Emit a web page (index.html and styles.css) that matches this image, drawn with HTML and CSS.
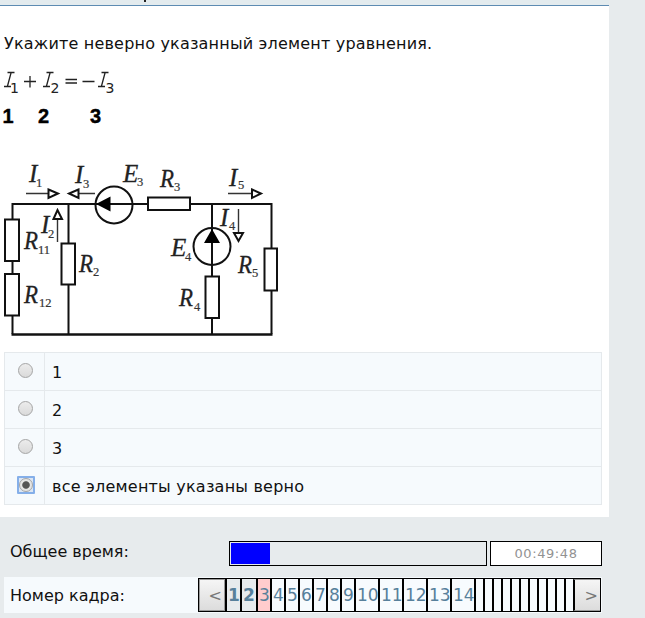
FILE: index.html
```
<!DOCTYPE html>
<html lang="ru">
<head>
<meta charset="utf-8">
<title>Тест</title>
<link rel="stylesheet" href="styles.css">
</head>
<body>
<main class="sheet">
  <div class="strip"><i class="tail"></i></div>
  <p class="question">Укажите неверно указанный элемент уравнения.</p>
  <svg class="figure" width="280" height="284" viewBox="0 60 280 284">
    <g class="formula">
      <g class="thin">
        <path d="M7.500 72.500h7M4 86.500h7M11 73l-3.500 13M46.500 72.500h7M43 86.500h7M50 73l-3.500 13M101.500 72.500h7M98 86.500h7M105 73l-3.500 13"/>
        <path d="M24 81.500h12M30 76v11.500M65.500 79.500h11.500M65.500 83h11.500M82.500 81.500h12"/>
      </g>
      <text x="10" y="93">1</text><text x="50.500" y="93">2</text><text x="105.500" y="93">3</text>
    </g>
    <g class="marks"><text x="2.500" y="123">1</text><text x="38" y="123">2</text><text x="90" y="123">3</text></g>
    <g class="wire">
      <path d="M12.500 219v-15H95M133 204H148M190 204H271.500V248M271.500 291V334M68.500 204V243M68.500 285V334M12.500 261V274M12.500 316V334M212 204V276M212 318V334"/>
      <path class="base" d="M11.500 334.500H272.500"/>
      <path d="M5 219.500h14v41.500H5zM5 274h14v41.500H5zM61.500 243.500h13.500v41H61.500zM148 197.500h42v12.500H148zM205.500 276.500h13.500v41.500h-13.500zM264.500 248.500h12.500v42h-12.500z"/>
      <circle cx="114" cy="205" r="18.500"/><circle cx="212" cy="246.500" r="18.500"/>
      <path d="M95 204H133"/>
    </g>
    <path d="M96 204l14.500-7.500v15zM212 229l8 14h-16z"/>
    <g class="arrow">
      <path d="M26 193.500H48M95 193.500H78M228 193.500H251M57.500 242V220M238.500 209V232"/>
      <path class="head" d="M48.500 189.500L58 193.500L48.500 198zM78.500 189.500L69 193.500L78.500 198zM252 189.500L261 193.500L252 198zM53.500 219L57.500 210L62 219zM234 233H243L238.500 241z"/>
    </g>
    <g class="labels">
      <text x="29" y="182">I</text><text x="75" y="183">I</text><text x="41" y="233">I</text><text x="229" y="186">I</text><text x="220" y="226">I</text>
      <text x="123" y="182">E</text><text x="171" y="256">E</text>
      <text x="160" y="187" textLength="14" lengthAdjust="spacingAndGlyphs">R</text><text x="24" y="249" textLength="14" lengthAdjust="spacingAndGlyphs">R</text><text x="24" y="303" textLength="14" lengthAdjust="spacingAndGlyphs">R</text><text x="79" y="272" textLength="14" lengthAdjust="spacingAndGlyphs">R</text><text x="179" y="306" textLength="14" lengthAdjust="spacingAndGlyphs">R</text><text x="238" y="273" textLength="14" lengthAdjust="spacingAndGlyphs">R</text>
    </g>
    <g class="subs">
      <text x="36" y="187">1</text><text x="83" y="188">3</text><text x="48" y="238">2</text><text x="238" y="189">5</text><text x="229" y="230">4</text>
      <text x="137" y="186">3</text><text x="185" y="261">4</text>
      <text x="174" y="191">3</text><text x="38" y="254">11</text><text x="39" y="307">12</text><text x="93" y="276">2</text><text x="194" y="311">4</text><text x="252" y="277">5</text>
    </g>
  </svg>
  <div class="answers">
    <label class="answer"><span class="pick"><i class="radio"></i></span><span class="text">1</span></label>
    <label class="answer"><span class="pick"><i class="radio"></i></span><span class="text">2</span></label>
    <label class="answer"><span class="pick"><i class="radio"></i></span><span class="text">3</span></label>
    <label class="answer"><span class="pick"><span class="focus"><i class="radio chosen"></i></span></span><span class="text">все элементы указаны верно</span></label>
  </div>
</main>
<footer class="status">
  <div class="row time">
    <span class="caption">Общее время:</span>
    <div class="progress"><div class="done"></div></div>
    <div class="clock">00:49:48</div>
  </div>
  <div class="row frames">
    <span class="caption">Номер кадра:</span>
    <nav class="pager">
      <button class="step">&lt;</button>
      <b class="seen">1</b><b class="seen">2</b><a class="now">3</a><a>4</a><a>5</a><a>6</a><a>7</a><a>8</a><a>9</a><a>10</a><a>11</a><a>12</a><a>13</a><a>14</a>
      <a></a><a></a><a></a><a></a><a></a><a></a><a></a><a></a><a></a><a></a><a></a>
      <button class="step next">&gt;</button>
    </nav>
  </div>
</footer>
</body>
</html>
```
FILE: styles.css
```
* { box-sizing: border-box; }
body {
  margin: 0;
  height: 618px;
  overflow: hidden;
  background: #e7ebed;
  color: #111;
  font: 16px/20px "DejaVu Sans", Verdana, sans-serif;
}
.sheet { width: 609px; height: 517px; background: #fff; display: flex; flex-direction: column; }
.strip { height: 6px; flex: none; background: #e3ebee; border-bottom: 1px solid #5d8bb2; }
.tail { display: block; width: 2px; height: 2px; margin-left: 144px; background: #222; }
.question { margin: 27px 0 0 4px; height: 27px; line-height: 21px; letter-spacing: 0.19px; white-space: nowrap; }
.figure { display: block; flex: none; }
.formula text { font: 14px "DejaVu Sans", sans-serif; fill: #222; }
.thin { stroke: #222; stroke-width: 1.3; fill: none; }
.marks text { font: bold 20px "Liberation Sans", sans-serif; stroke: #000; stroke-width: 0.4; }
.wire { fill: none; stroke: #111; stroke-width: 2; }
.wire .base { stroke-width: 2.4; }
.arrow { fill: none; stroke: #333; stroke-width: 1.4; }
.head { stroke: #111; stroke-width: 2; fill: #fff; }
.labels text { font: italic 25px "Liberation Serif", serif; fill: #222; stroke: #222; stroke-width: 0.3; }
.subs text { font: 12.5px "Liberation Serif", serif; fill: #333; stroke: #333; stroke-width: 0.2; }
.answers { margin: 8px 0 0 4px; width: 598px; border: 1px solid #e5e9ec; border-bottom: 0; }
.answer { display: flex; height: 38px; background: #f6fafd; border-bottom: 1px solid #e5e9ec; }
.pick { width: 40px; border-right: 1px solid #e5e9ec; padding: 10px 0 0 13px; }
.text { padding: 10px 0 0 7px; letter-spacing: 0.22px; white-space: nowrap; }
.radio {
  display: block;
  width: 15px;
  height: 15px;
  border: 1px solid #a5a5a5;
  border-radius: 50%;
  background: linear-gradient(#ececec, #dadada);
}
.focus {
  display: block;
  width: 18px;
  height: 18px;
  margin: -1px 0 0 -1px;
  border: 2px solid #85afe9;
  border-radius: 1px;
  background: #dce6f3;
}
.chosen {
  width: 14px;
  height: 14px;
  background: radial-gradient(circle, #555 0 3.3px, #e4e4e4 4.2px);
}
.status { width: 602px; padding-top: 23px; }
.row { display: flex; }
.time { height: 37px; padding-left: 4px; }
.caption { width: 194px; padding-left: 6px; white-space: nowrap; }
.time .caption { width: 225px; padding-top: 2px; }
.progress { width: 258px; height: 25px; margin-top: 1px; border: 1px solid #000; padding: 1px 0 1px 1px; }
.done { width: 39px; height: 21px; background: #00f; }
.clock {
  width: 112px;
  height: 25px;
  margin: 1px 0 0 3px;
  border: 1px solid #000;
  background: #fff;
  color: #929292;
  font-size: 13px;
  line-height: 24px;
  letter-spacing: 0.6px;
  text-align: center;
}
.frames { height: 36px; margin-left: 4px; background: #f6fafd; }
.frames .caption { padding-top: 9px; }
.pager {
  display: grid;
  grid-template-columns: 26px 15px 16px 14px repeat(6, 14px) repeat(5, 24px) repeat(11, 9px) 28px;
  width: 403px;
  height: 34px;
  margin-top: 1px;
  border: 1px solid #000;
  overflow: hidden;
}
.pager a, .pager b {
  border-left: 2px solid #000;
  background: #f7fbfe;
  color: #57809b;
  font-size: 17px;
  line-height: 33px;
  padding-left: 1px;
  white-space: nowrap;
  overflow: hidden;
}
.pager .seen { background: #e7ebed; }
.pager .now { background: #ffcccd; }
.step {
  margin: 0;
  padding: 2px 2px 0 0;
  border: 1px solid #999;
  background: linear-gradient(#f5f5f5, #dcdcdc);
  color: #777;
  font: inherit;
  text-align: right;
}
.next { border-left: 2px solid #000; }
```
